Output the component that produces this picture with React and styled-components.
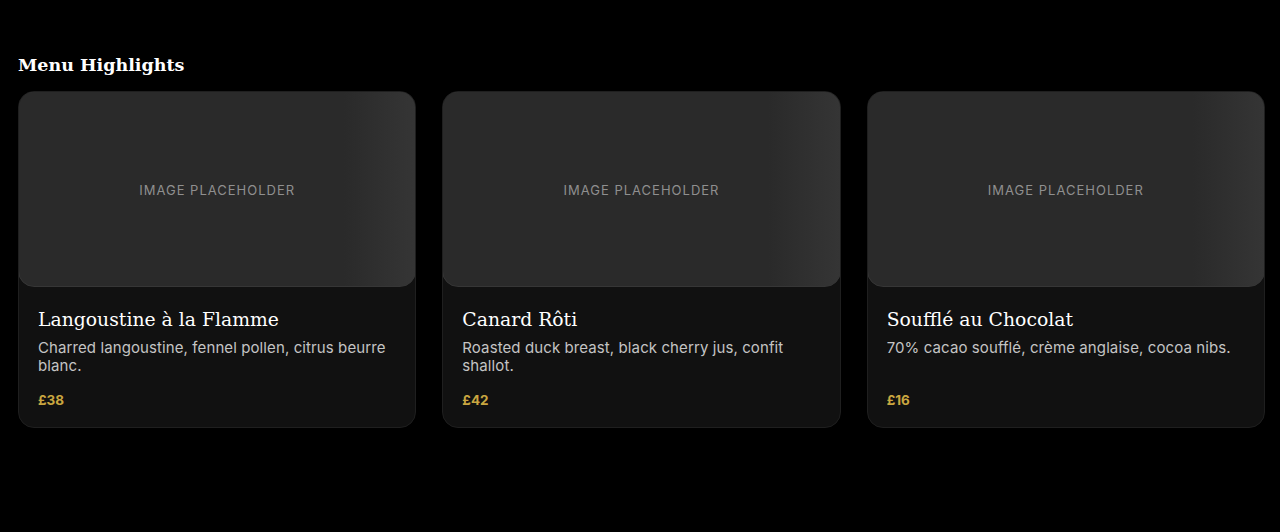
import styled, { createGlobalStyle } from "styled-components"

const dishes = [
  {
    name: "Langoustine à la Flamme",
    description: "Charred langoustine, fennel pollen, citrus beurre blanc.",
    price: "£38",
  },
  {
    name: "Canard Rôti",
    description: "Roasted duck breast, black cherry jus, confit shallot.",
    price: "£42",
  },
  {
    name: "Soufflé au Chocolat",
    description: "70% cacao soufflé, crème anglaise, cocoa nibs.",
    price: "£16",
  },
]

export default function App() {
  return (
    <>
      <GlobalStyle />
      <Page>
        <SectionTitle>Menu Highlights</SectionTitle>
        <CardGrid>
          {dishes.map((dish) => (
            <Card key={dish.name}>
              <ImagePlaceholder>Image placeholder</ImagePlaceholder>
              <CardBody>
                <DishName>{dish.name}</DishName>
                <DishDescription>{dish.description}</DishDescription>
                <Price>{dish.price}</Price>
              </CardBody>
            </Card>
          ))}
        </CardGrid>
      </Page>
    </>
  )
}

const GlobalStyle = createGlobalStyle`
  html, body {
    margin: 0;
    background: #000000;
  }
  * {
    box-sizing: border-box;
  }
`

const Page = styled.main`
  min-height: 532px;
  padding: 53px 15px 0 18px;
  background: #000000;
  font-family: Inter, "Liberation Sans", sans-serif;
`

const SectionTitle = styled.h2`
  margin: 0 0 14px;
  font-family: "DejaVu Serif", serif;
  font-weight: 700;
  font-size: 17.5px;
  line-height: 24px;
  color: #ffffff;
`

const CardGrid = styled.div`
  display: grid;
  grid-template-columns: repeat(3, 1fr);
  gap: 26px;
`

const Card = styled.article`
  display: flex;
  flex-direction: column;
  background: #111111;
  border: 1px solid #1f1f1f;
  border-radius: 16px;
  overflow: hidden;
`

const ImagePlaceholder = styled.div`
  height: 196px;
  display: flex;
  align-items: center;
  justify-content: center;
  margin: -1px -1px 0;
  padding-top: 2px;
  border: 1px solid #363636;
  border-radius: 16px;
  background: linear-gradient(90deg, #2a2a2a 82%, #353535 100%);
  color: #8f8f8f;
  font-size: 13px;
  letter-spacing: 1px;
  text-transform: uppercase;
`

const CardBody = styled.div`
  flex: 1;
  display: flex;
  flex-direction: column;
  padding: 21px 19px 19px;
`

const DishName = styled.h3`
  margin: 0 0 7px;
  font-family: "DejaVu Serif", serif;
  font-weight: 400;
  font-size: 18.8px;
  line-height: 24px;
  color: #ffffff;
`

const DishDescription = styled.p`
  margin: 0 0 17px;
  font-size: 15px;
  line-height: 18px;
  letter-spacing: 0.1px;
  color: #c4c4c4;
`

const Price = styled.span`
  margin-top: auto;
  font-size: 13.5px;
  line-height: 16px;
  font-weight: 700;
  color: #c9a640;
`
